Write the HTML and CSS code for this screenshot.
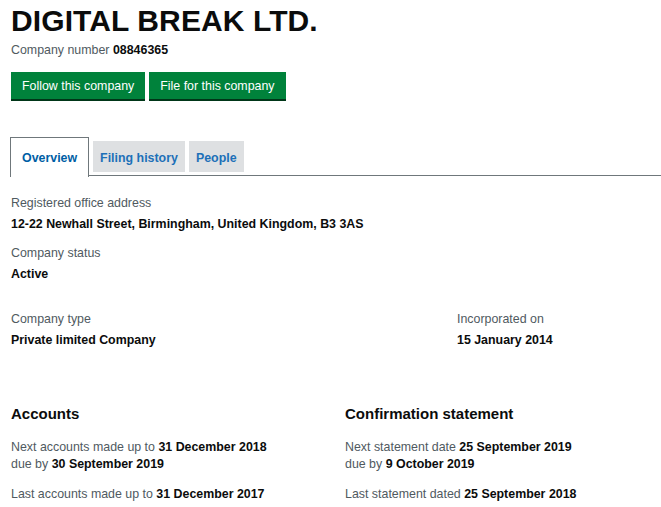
FILE: index.html
```html
<!DOCTYPE html>
<html lang="en">
    <head>
        <meta charset="UTF-8">
        <meta name="viewport" content="width=device-width, initial-scale=1.0">
        <title>DIGITAL BREAK LTD. - Overview</title>
        <link rel="stylesheet" href="styles.css">
    </head>
    <body>
        <div class="container">
            <h1 class="company-name">DIGITAL BREAK LTD.</h1>
            <p class="company-number">Company number <strong>08846365</strong></p>

            <div class="actions">
                <button class="green-button">Follow this company</button>
                <button class="green-button">File for this company</button>
            </div>

            <!-- Tabs -->
            <ul class="tabs">
                <li class="tab active">Overview</li>
                <li class="tab">Filing history</li>
                <li class="tab">People</li>
            </ul>

            <div class="overview">
                <dl class="field">
                    <dt>Registered office address</dt>
                    <dd>12-22 Newhall Street, Birmingham, United Kingdom, B3 3AS</dd>
                </dl>
                <dl class="field">
                    <dt>Company status</dt>
                    <dd>Active</dd>
                </dl>

                <div class="row type-row">
                    <dl class="field">
                        <dt>Company type</dt>
                        <dd>Private limited Company</dd>
                    </dl>
                    <dl class="field incorporated">
                        <dt>Incorporated on</dt>
                        <dd>15 January 2014</dd>
                    </dl>
                </div>

                <div class="row dates-row">
                    <div class="column">
                        <h2>Accounts</h2>
                        <p>Next accounts made up to <strong>31 December 2018</strong><br>
                        due by <strong>30 September 2019</strong></p>
                        <p>Last accounts made up to <strong>31 December 2017</strong></p>
                    </div>
                    <div class="column">
                        <h2>Confirmation statement</h2>
                        <p>Next statement date <strong>25 September 2019</strong><br>
                        due by <strong>9 October 2019</strong></p>
                        <p>Last statement dated <strong>25 September 2018</strong></p>
                    </div>
                </div>
            </div>
        </div>
    </body>
</html>
```

FILE: styles.css
```css
/* Page font and colours */
body {
    margin: 0;
    font-family: "Liberation Sans", Arial, sans-serif;
    font-size: 12.4px;
    color: #0b0c0c;
    background-color: #fff;
}

.container {
    padding: 0 0 0 11px;
}

strong {
    font-weight: bold;
    color: #0b0c0c;
}

/* Header */
.company-name {
    margin: 0;
    padding-top: 3px;
    font-size: 30px;
    line-height: 36px;
    font-weight: bold;
    letter-spacing: 0.1px;
}

.company-number {
    margin: 2px 0 0 0;
    line-height: 18px;
    color: #505a5f;
}

/* Buttons */
.actions {
    display: flex;
    gap: 4px;
    margin-top: 13px;
}

.green-button {
    padding: 0 11px;
    height: 27px;
    background-color: #00823b;
    color: #fff;
    font-family: inherit;
    font-size: 12.4px;
    border: none;
    box-shadow: 0 2px 0 #003618;
    cursor: pointer;
}

/* Tabs */
.tabs {
    display: flex;
    align-items: flex-start;
    gap: 4px;
    margin: 38px 0 0 -1px;
    padding: 0;
    list-style: none;
    border-bottom: 1px solid #6f777b;
    height: 38px;
}

.tab {
    margin-top: 4px;
    padding: 2px 7px 0 7px;
    height: 29px;
    line-height: 30px;
    background-color: #dee0e2;
    color: #1d70b8;
    font-weight: bold;
}

.tab.active {
    margin-top: 0;
    padding: 0 11px;
    height: 39px;
    line-height: 40px;
    background-color: #fff;
    border: 1px solid #6f777b;
    border-bottom: none;
    color: #005ea5;
}

/* Overview fields */
.overview {
    padding-top: 18px;
}

.field {
    margin: 0 0 11px 0;
}

.field dt {
    line-height: 18px;
    color: #505a5f;
}

.field dd {
    margin: 3px 0 0 0;
    line-height: 18px;
    font-weight: bold;
}

.row {
    display: flex;
}

.type-row {
    margin-top: 27px;
}

.type-row .field {
    width: 446px;
    flex-shrink: 0;
}

.type-row .incorporated {
    width: auto;
}

.dates-row {
    margin-top: 44px;
}

.dates-row .column {
    width: 334px;
    flex-shrink: 0;
}

.dates-row h2 {
    margin: 0;
    font-size: 15px;
    line-height: 20px;
    font-weight: bold;
}

.dates-row p {
    margin: 13px 0 0 0;
    line-height: 17px;
    color: #505a5f;
}

.dates-row h2 + p {
    margin-top: 15px;
}
```
